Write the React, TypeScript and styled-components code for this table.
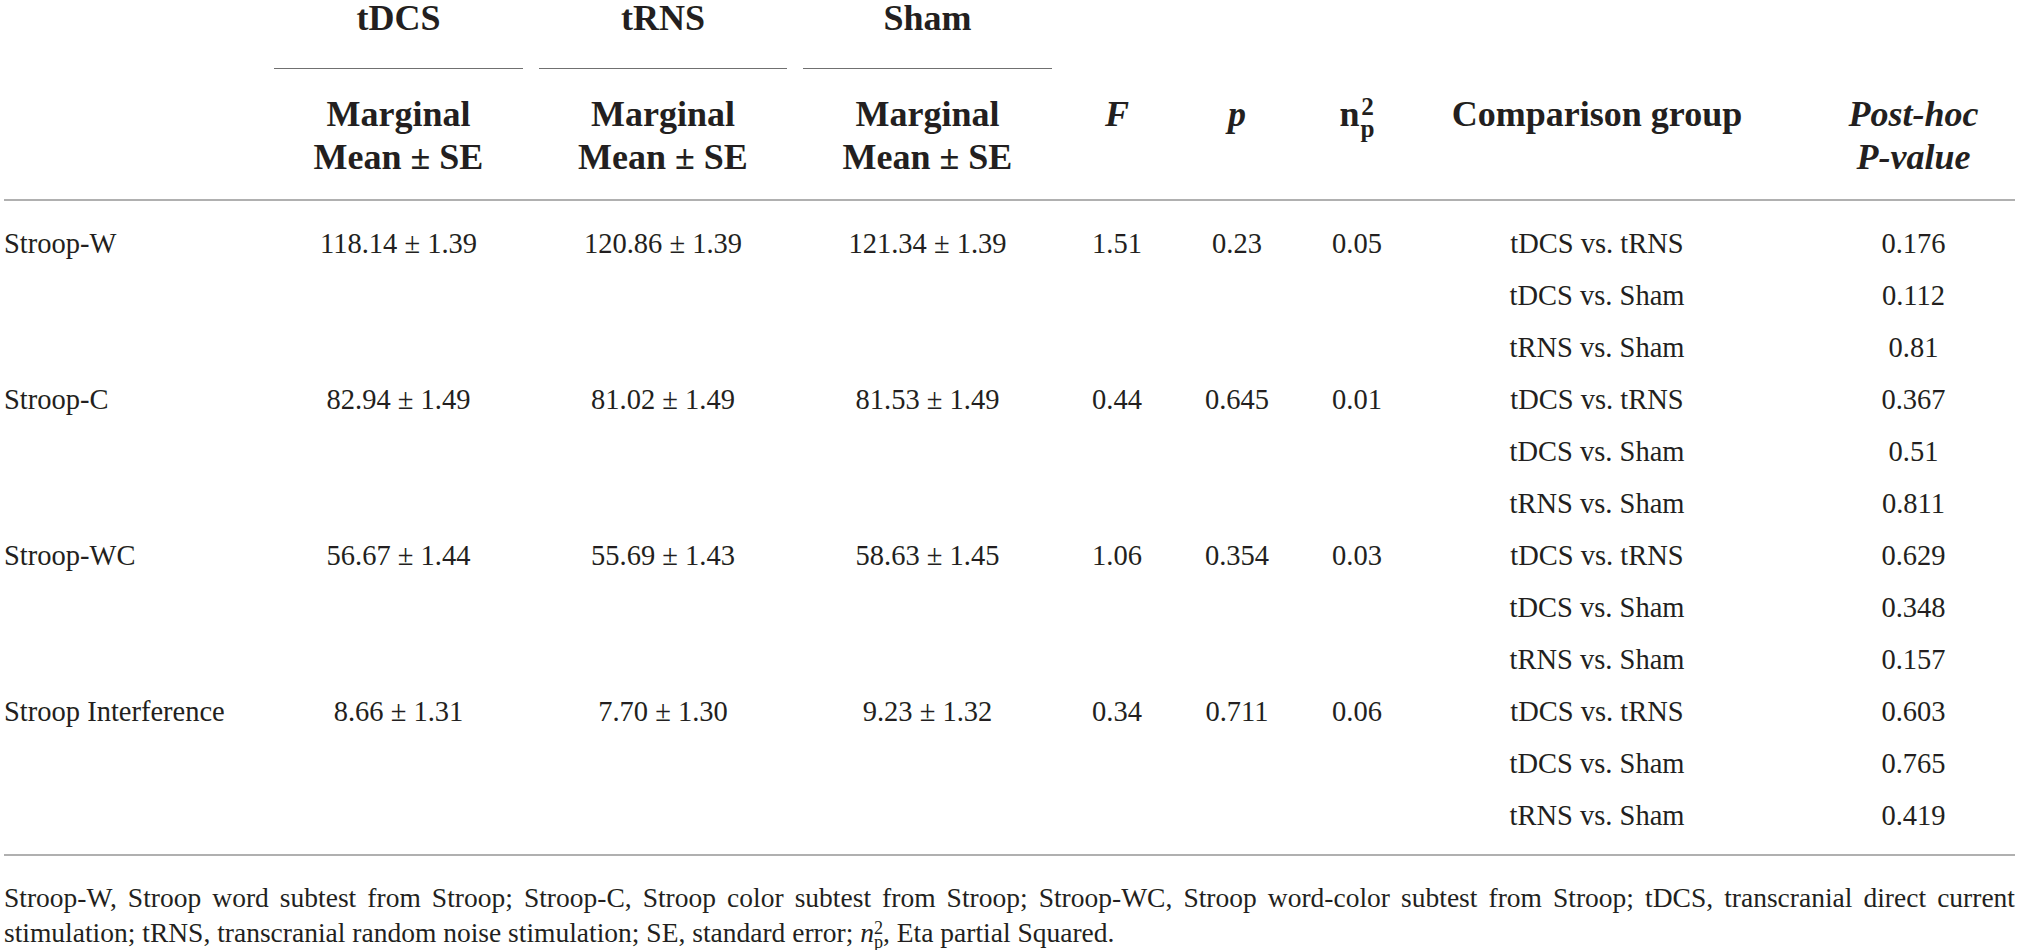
import styled, { createGlobalStyle } from "styled-components";

const GlobalStyle = createGlobalStyle`
  html, body {
    margin: 0;
    padding: 0;
    background: #ffffff;
  }
  body {
    font-family: "Liberation Serif", "Times New Roman", serif;
    color: #231f20;
  }
`;

const COLUMNS = "262px 265px 264px 265px 114px 126px 114px 366px 235px";

const Page = styled.div`
  width: 2011px;
  padding: 0 4px;
`;

const GroupRow = styled.div`
  display: grid;
  grid-template-columns: ${COLUMNS};
  font-size: 36px;
  font-weight: bold;
  line-height: 36px;
`;

const GroupLabel = styled.div`
  margin: 0 8px;
  padding-bottom: 32px;
  border-bottom: 1px solid #707070;
  text-align: center;
`;

const HeadRow = styled.div`
  display: grid;
  grid-template-columns: ${COLUMNS};
  padding: 24px 0 20px;
  border-bottom: 2px solid #b0b0b0;
  font-size: 36px;
  font-weight: bold;
  line-height: 43px;
`;

const HeadCell = styled.div<{ $italic?: boolean; $pad?: number }>`
  text-align: center;
  font-style: ${(p) => (p.$italic ? "italic" : "normal")};
  padding-left: ${(p) => p.$pad ?? 0}px;
`;

const Scripts = styled.span`
  display: inline-flex;
  flex-direction: column;
  font-size: 0.7em;
  line-height: 0.85;
  vertical-align: 0.42em;
  margin-left: 1px;
`;

const Body = styled.div`
  padding: 17px 0 12px;
  border-bottom: 2px solid #b0b0b0;
`;

const Row = styled.div`
  display: grid;
  grid-template-columns: ${COLUMNS};
  height: 52px;
  font-size: 28.5px;
  line-height: 52px;
`;

const Cell = styled.div<{ $left?: boolean; $pad?: number }>`
  text-align: ${(p) => (p.$left ? "left" : "center")};
  padding-left: ${(p) => p.$pad ?? 0}px;
  white-space: nowrap;
`;

const Footnote = styled.div`
  margin-top: 24px;
  font-size: 27.5px;
  line-height: 35px;
`;

const FootLine = styled.div<{ $justify?: boolean }>`
  height: 35px;
  text-align: ${(p) => (p.$justify ? "justify" : "left")};
  text-align-last: ${(p) => (p.$justify ? "justify" : "left")};
  white-space: nowrap;
`;

const FootScripts = styled.span`
  display: inline-flex;
  flex-direction: column;
  font-size: 0.66em;
  line-height: 0.8;
  vertical-align: 0.45em;
  font-style: normal;
`;

type Stat = {
  label: string;
  tdcs: string;
  trns: string;
  sham: string;
  f: string;
  p: string;
  eta: string;
};

const stats: Stat[] = [
  { label: "Stroop-W", tdcs: "118.14 ± 1.39", trns: "120.86 ± 1.39", sham: "121.34 ± 1.39", f: "1.51", p: "0.23", eta: "0.05" },
  { label: "Stroop-C", tdcs: "82.94 ± 1.49", trns: "81.02 ± 1.49", sham: "81.53 ± 1.49", f: "0.44", p: "0.645", eta: "0.01" },
  { label: "Stroop-WC", tdcs: "56.67 ± 1.44", trns: "55.69 ± 1.43", sham: "58.63 ± 1.45", f: "1.06", p: "0.354", eta: "0.03" },
  { label: "Stroop Interference", tdcs: "8.66 ± 1.31", trns: "7.70 ± 1.30", sham: "9.23 ± 1.32", f: "0.34", p: "0.711", eta: "0.06" },
];

const comparisons = ["tDCS vs. tRNS", "tDCS vs. Sham", "tRNS vs. Sham"];

const postHoc = [
  ["0.176", "0.112", "0.81"],
  ["0.367", "0.51", "0.811"],
  ["0.629", "0.348", "0.157"],
  ["0.603", "0.765", "0.419"],
];

const App = () => {
  return (
    <Page>
      <GlobalStyle />
      <GroupRow>
        <div />
        <GroupLabel>tDCS</GroupLabel>
        <GroupLabel>tRNS</GroupLabel>
        <GroupLabel>Sham</GroupLabel>
      </GroupRow>
      <HeadRow>
        <HeadCell />
        <HeadCell>Marginal<br />Mean ± SE</HeadCell>
        <HeadCell>Marginal<br />Mean ± SE</HeadCell>
        <HeadCell>Marginal<br />Mean ± SE</HeadCell>
        <HeadCell $italic>F</HeadCell>
        <HeadCell $italic>p</HeadCell>
        <HeadCell>
          n
          <Scripts>
            <span>2</span>
            <span>p</span>
          </Scripts>
        </HeadCell>
        <HeadCell>Comparison group</HeadCell>
        <HeadCell $italic $pad={32}>Post-hoc<br />P-value</HeadCell>
      </HeadRow>
      <Body>
        {stats.map((s, i) =>
          comparisons.map((c, j) => (
            <Row key={`${i}-${j}`}>
              <Cell $left>{j === 0 ? s.label : ""}</Cell>
              <Cell>{j === 0 ? s.tdcs : ""}</Cell>
              <Cell>{j === 0 ? s.trns : ""}</Cell>
              <Cell>{j === 0 ? s.sham : ""}</Cell>
              <Cell>{j === 0 ? s.f : ""}</Cell>
              <Cell>{j === 0 ? s.p : ""}</Cell>
              <Cell>{j === 0 ? s.eta : ""}</Cell>
              <Cell>{c}</Cell>
              <Cell $pad={32}>{postHoc[i][j]}</Cell>
            </Row>
          ))
        )}
      </Body>
      <Footnote>
        <FootLine $justify>
          Stroop-W, Stroop word subtest from Stroop; Stroop-C, Stroop color subtest from Stroop; Stroop-WC, Stroop
          word-color subtest from Stroop; tDCS, transcranial direct current
        </FootLine>
        <FootLine>
          stimulation; tRNS, transcranial random noise stimulation; SE, standard error;{" "}
          <i>n</i>
          <FootScripts>
            <span>2</span>
            <span>p</span>
          </FootScripts>
          , Eta partial Squared.
        </FootLine>
      </Footnote>
    </Page>
  );
};

export default App;
